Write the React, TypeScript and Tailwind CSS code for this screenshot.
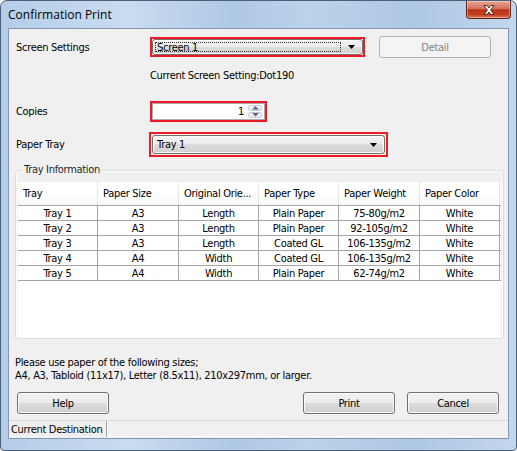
import type { ReactNode } from "react";

const ui =
  "font-['DejaVu_Sans_Condensed','DejaVu_Sans',sans-serif] text-[11px] leading-[13px] tracking-[-0.3px] text-black";

const columns = ["Tray", "Paper Size", "Original Orie...", "Paper Type", "Paper Weight", "Paper Color"];

const trays = [
  ["Tray 1", "A3", "Length", "Plain Paper", "75-80g/m2", "White"],
  ["Tray 2", "A3", "Length", "Plain Paper", "92-105g/m2", "White"],
  ["Tray 3", "A3", "Length", "Coated GL", "106-135g/m2", "White"],
  ["Tray 4", "A4", "Width", "Coated GL", "106-135g/m2", "White"],
  ["Tray 5", "A4", "Width", "Plain Paper", "62-74g/m2", "White"],
];

const gridCols = "grid grid-cols-[80px_81px_80px_80px_81px_80px]";

function Arrow() {
  return (
    <svg width="7" height="4" viewBox="0 0 7 4">
      <path d="M0 0h7L3.5 4z" fill="#000" />
    </svg>
  );
}

function Button({ children, disabled, className = "" }: { children: ReactNode; disabled?: boolean; className?: string }) {
  return (
    <button
      type="button"
      className={
        "flex h-[22px] items-center justify-center rounded-[3px] border " +
        (disabled
          ? "border-[#adb2b5] bg-[#f4f4f4] text-[#838383] "
          : "border-[#707070] bg-[linear-gradient(to_bottom,#f2f2f2,#ebebeb_50%,#dddddd_50%,#cfcfcf)] shadow-[inset_0_0_0_1px_#fbfbfb] ") +
        className
      }
    >
      {children}
    </button>
  );
}

function Combo({ children, focused }: { children: ReactNode; focused?: boolean }) {
  return (
    <div className="flex h-full w-full items-center rounded-[3px] border border-[#707070] bg-[linear-gradient(to_bottom,#f2f2f2,#ebebeb_50%,#dddddd_50%,#cfcfcf)] shadow-[inset_0_0_0_1px_#fbfbfb]">
      <div
        className={
          "ml-[2px] flex h-[calc(100%-4px)] flex-1 items-center pl-[1px] " +
          (focused ? "border border-dotted border-[#333]" : "border border-transparent")
        }
      >
        {children}
      </div>
      <div className="flex w-[21px] justify-center">
        <Arrow />
      </div>
    </div>
  );
}

function Spin() {
  return (
    <div className="flex h-full w-full items-center border border-[#abadb3] bg-white pr-[2px]">
      <span className="flex-1 pr-[4px] text-right">1</span>
      <div className="flex h-[calc(100%-2px)] w-[14px] flex-col gap-[1px]">
        {["M0 3.5L3.5 0 7 3.5z", "M0 0h7L3.5 3.5z"].map((d) => (
          <div
            key={d}
            className="flex flex-1 items-center justify-center rounded-[2px] border border-[#c9cdd3] bg-[linear-gradient(to_bottom,#f7f7f7,#e6e8eb)]"
          >
            <svg width="7" height="4" viewBox="0 0 7 4">
              <path d={d} fill="#5a6d8c" />
            </svg>
          </div>
        ))}
      </div>
    </div>
  );
}

function CloseButton() {
  return (
    <div className="mr-[5px] flex h-[18px] w-[45px] items-center justify-center self-start rounded-b-[4px] border border-t-0 border-[#5e2018] bg-[linear-gradient(to_bottom,#e8a496,#d4705c_45%,#b8331a_52%,#c2401f_80%,#de7b5c)] shadow-[inset_0_0_0_1px_rgba(255,255,255,0.35)]">
      <svg width="14" height="12" viewBox="0 0 14 12">
        <path
          d="M2 1.5h3l2 2.4 2-2.4h3L8.6 6l3.4 4.5H9L7 8.1 5 10.5H2L5.4 6z"
          fill="#fff"
          stroke="#4a1c14"
          strokeWidth="0.9"
          strokeLinejoin="round"
        />
      </svg>
    </div>
  );
}

export default function App() {
  return (
    <div className="h-[451px] w-[517px] overflow-hidden rounded-t-[7px] rounded-b-[4px] border border-[#4b6079] bg-[linear-gradient(to_right,#b5cde8,#c9dcf0_25%,#afc8e4_45%,#bcd2ea_60%,#aec7e3_80%,#c3d7ed)]">
      <div className="flex h-[27px] items-center">
        <span className="flex-1 pl-[7px] font-['Open_Sans','Liberation_Sans',sans-serif] text-[12px] text-black">
          Confirmation Print
        </span>
        <CloseButton />
      </div>

      <div className={"mx-[7px] flex h-[411px] flex-col border border-[#8398b0] bg-[#f0f0f0] " + ui}>
        <div className="mt-[7px] flex h-[22px] items-center pl-[7px]">
          <span className="w-[134px]">Screen Settings</span>
          <div className="h-[20px] w-[215px] border-2 border-[#ec1c24]">
            <Combo focused>Screen 1</Combo>
          </div>
          <Button disabled className="ml-[14px] w-[112px]">
            Detail
          </Button>
        </div>

        <div className="mt-[10px] flex h-[14px] items-center pl-[141px]">Current Screen Setting:Dot190</div>

        <div className="mt-[19px] flex h-[21px] items-center pl-[7px]">
          <span className="w-[134px]">Copies</span>
          <div className="h-[21px] w-[117px] border-2 border-[#ec1c24]">
            <Spin />
          </div>
        </div>

        <div className="mt-[10px] flex h-[25px] items-center pl-[7px]">
          <span className="w-[133px]">Paper Tray</span>
          <div className="h-[25px] w-[239px] border-2 border-[#ec1c24] p-[1px]">
            <Combo>Tray 1</Combo>
          </div>
        </div>

        <fieldset className="mt-[6px] ml-[6px] mr-[4px] rounded-[3px] border border-[#d5dfe5] px-[2px] pb-[1px] shadow-[inset_0_0_0_1px_#fff]">
          <legend className="ml-[5px] px-[1px] leading-[14px] text-[#1e1e1e]">Tray Information</legend>
          <div className="mt-[5px] h-[155px] bg-white">
            <div className={gridCols + " h-[23px]"}>
              {columns.map((c) => (
                <div
                  key={c}
                  className="flex items-center border-r border-[#e5e5e5] bg-[linear-gradient(to_bottom,#ffffff,#ffffff_50%,#f7f8fa)] pl-[5px]"
                >
                  {c}
                </div>
              ))}
            </div>
            <div className="border-t border-[#a5a5a5]">
              {trays.map((row) => (
                <div key={row[0]} className={gridCols + " h-[15px] border-b border-[#a5a5a5]"}>
                  {row.map((cell, i) => (
                    <div key={i} className="flex items-center justify-center border-r border-[#a5a5a5]">
                      {cell}
                    </div>
                  ))}
                </div>
              ))}
            </div>
          </div>
        </fieldset>

        <div className="mt-[17px] pl-[6px]">
          <p>Please use paper of the following sizes;</p>
          <p>A4, A3, Tabloid (11x17), Letter (8.5x11), 210x297mm, or larger.</p>
        </div>

        <div className="mt-[10px] flex items-center pl-[8px] pr-[9px]">
          <Button className="w-[92px]">Help</Button>
          <Button className="ml-auto w-[92px]">Print</Button>
          <Button className="ml-[12px] w-[92px]">Cancel</Button>
        </div>

        <div className="mt-[6px] flex flex-1 border-t border-[#d9d9d9] pb-[1px]">
          <div className="flex items-center border-r border-[#a0a0a0] pl-[2px] pr-[4px] shadow-[1px_0_0_#fff]">
            Current Destination
          </div>
          <div className="flex-1 border-b border-white" />
        </div>
      </div>
    </div>
  );
}
